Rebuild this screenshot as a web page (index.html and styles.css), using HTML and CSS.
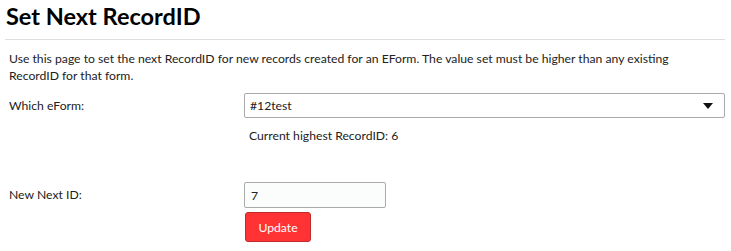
FILE: index.html
```html
<!DOCTYPE html>
<html lang="en">
<head>
  <meta charset="UTF-8" />
  <title>Set Next RecordID</title>
  <link rel="stylesheet" href="styles.css">
</head>
<body>
  <div class="page">
    <h1>Set Next RecordID</h1>
    <div class="rule"></div>
    <p class="intro">Use this page to set the next RecordID for new records created for an EForm. The value set must be higher than any existing RecordID for that form.</p>

    <div class="row">
      <label class="label" for="eform">Which eForm:</label>
      <div class="control">
        <div class="select">
          <span>#12test</span>
          <span class="caret"></span>
        </div>
        <p class="current">Current highest RecordID: 6</p>
      </div>
    </div>

    <div class="row row-next">
      <label class="label" for="nextId">New Next ID:</label>
      <div class="control">
        <input type="text" id="nextId" class="input" value="7" />
        <button class="button">Update</button>
      </div>
    </div>
  </div>
</body>
</html>
```

FILE: styles.css
```css
body {
  margin: 0;
  font-family: Lato, 'Open Sans', sans-serif;
  background: #fff;
  color: #222;
}
.page {
  padding: 0 6px 0 5px;
}
h1 {
  margin: 0;
  padding: 3px 0 0 1px;
  font-size: 23.5px;
  line-height: 26px;
  font-weight: 700;
  color: #000;
}
.rule {
  height: 1px;
  background: #dedede;
  margin: 10px 0 0;
}
.intro {
  margin: 10px 0 0;
  padding: 0 40px 0 4px;
  font-size: 12.2px;
  line-height: 17px;
  color: #222;
}
.row {
  display: grid;
  grid-template-columns: 239px 1fr;
  margin-top: 9px;
}
.label {
  padding-left: 4px;
  font-size: 12.2px;
  line-height: 25px;
  color: #222;
}
.select {
  height: 25px;
  box-sizing: border-box;
  border: 1px solid #aaa;
  border-radius: 2px;
  display: flex;
  align-items: center;
  justify-content: space-between;
  padding: 0 11px 0 5px;
  font-size: 12.2px;
}
.caret {
  width: 0;
  height: 0;
  border-left: 5px solid transparent;
  border-right: 5px solid transparent;
  border-top: 6px solid #111;
}
.current {
  margin: 9px 0 0 5px;
  font-size: 12.2px;
  line-height: 17px;
}
.row-next {
  margin-top: 38px;
}
.input {
  display: block;
  width: 142px;
  height: 26px;
  box-sizing: border-box;
  border: 1px solid #aaa;
  border-radius: 2px;
  background: #fbfcfc;
  padding: 0 6px;
  font-family: inherit;
  font-size: 12.2px;
  color: #222;
}
.button {
  display: block;
  margin: 4px 0 0 1px;
  width: 66px;
  height: 30px;
  background: #f33;
  color: #fff;
  border: 1px solid #c02a2a;
  border-radius: 3px;
  font-family: inherit;
  font-size: 12.2px;
  cursor: pointer;
}
```
